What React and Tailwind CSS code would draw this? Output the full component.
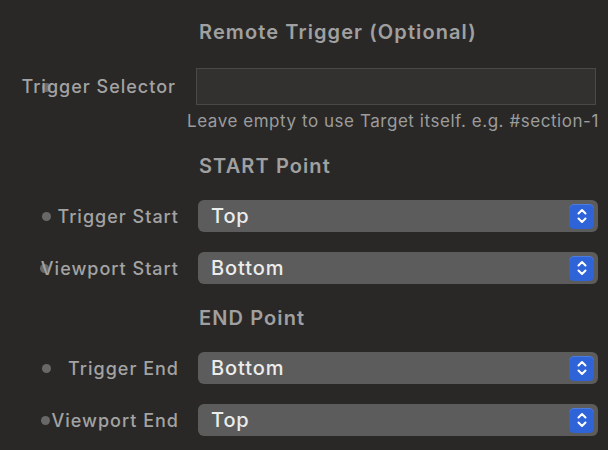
const font = { fontFamily: "Inter, 'Open Sans', sans-serif" };

const Dot = ({ className = "" }) => (
  <span className={`absolute h-[9px] w-[9px] rounded-full bg-[#686868] ${className}`} />
);

const Stepper = () => (
  <span className="flex h-[25px] w-[25px] items-center justify-center rounded-[5px] bg-[#2f64d9] shadow-[inset_0_1px_0_rgba(255,255,255,0.15)]">
    <svg width="12" height="18" viewBox="0 0 12 18" fill="none" stroke="white" strokeWidth="2" strokeLinecap="round" strokeLinejoin="round">
      <path d="M2.5 6.5 6 3l3.5 3.5" />
      <path d="M2.5 11.5 6 15l3.5-3.5" />
    </svg>
  </span>
);

const SelectRow = ({ label, value, dot, className = "" }) => (
  <div className={`relative flex h-[32px] items-center ${className}`}>
    {dot}
    <span className="relative w-[180px] pr-[1px] text-right text-[18px] font-medium tracking-[1px] text-[#a3a3a3]">
      {label}
    </span>
    <div className="ml-[18px] flex h-[32px] w-[400px] items-center justify-between rounded-[6px] bg-[#5c5c5c] pl-[13px] pr-[4px]">
      <span className="text-[20px] font-medium tracking-[0.9px] text-[#ececec]">{value}</span>
      <Stepper />
    </div>
  </div>
);

const Heading = ({ children, className = "" }) => (
  <div className={`flex h-[28px] items-center pl-[199px] text-[20px] font-semibold tracking-[1.1px] text-[#a0a0a0] ${className}`}>
    {children}
  </div>
);

export default function App() {
  return (
    <div className="flex h-[450px] w-[608px] flex-col overflow-hidden bg-[#292827]" style={font}>
      <Heading className="mt-[18px]">Remote Trigger (Optional)</Heading>

      <div className="relative mt-[22px] flex h-[37px] items-center">
        <Dot className="left-[42px] top-[15px]" />
        <span className="relative w-[176px] text-right text-[18px] font-medium tracking-[1px] text-[#a3a3a3]">
          Trigger Selector
        </span>
        <div className="ml-[20px] h-[37px] w-[400px] border border-[#4a4948] bg-[#323130]" />
      </div>
      <div className="mt-[3px] flex h-[28px] items-center whitespace-nowrap pl-[187px] text-[17px] tracking-[0.55px] text-[#9c9c9c]">
        Leave empty to use Target itself. e.g. #section-1
      </div>

      <Heading className="mt-[16px]">START Point</Heading>
      <SelectRow
        className="mt-[20px]"
        label="Trigger Start"
        value="Top"
        dot={<Dot className="left-[42px] top-[12px]" />}
      />
      <SelectRow
        className="mt-[20px]"
        label="Viewport Start"
        value="Bottom"
        dot={<Dot className="left-[40px] top-[12px]" />}
      />

      <Heading className="mt-[20px]">END Point</Heading>
      <SelectRow
        className="mt-[20px]"
        label="Trigger End"
        value="Bottom"
        dot={<Dot className="left-[42px] top-[12px]" />}
      />
      <SelectRow
        className="mt-[20px]"
        label="Viewport End"
        value="Top"
        dot={<Dot className="left-[41px] top-[12px]" />}
      />
    </div>
  );
}
